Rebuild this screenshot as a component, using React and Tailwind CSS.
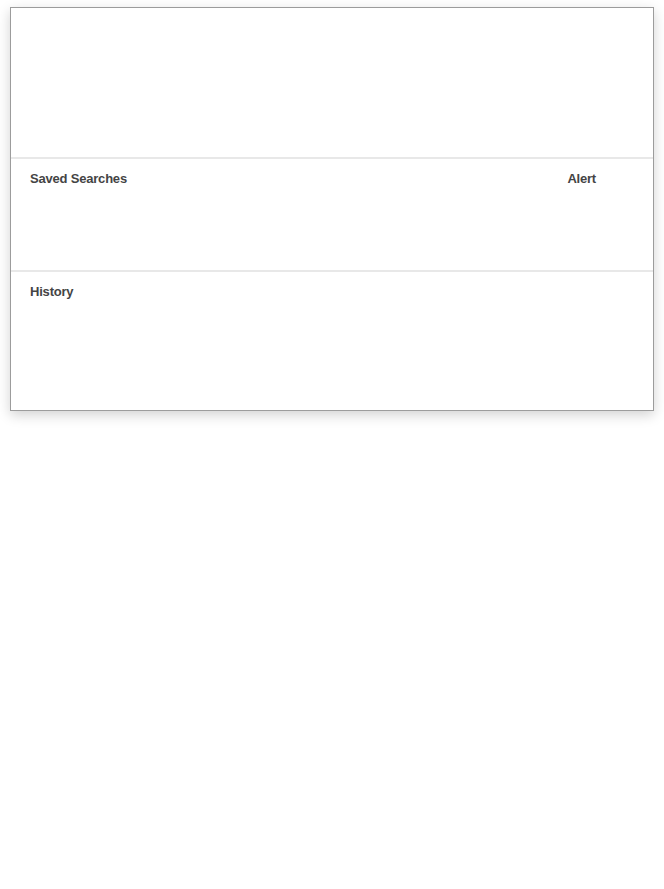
export default function App() {
  return (
    <div className="min-h-screen bg-white pt-[7px] pl-[10px]" style={{ fontFamily: '"Liberation Sans", Arial, sans-serif' }}>
      <div className="w-[644px] border border-[#9c9c9c] bg-white shadow-[0_4px_12px_rgba(0,0,0,0.18)]">
        <div className="h-[151px] border-b-2 border-[#e8e8e8]" />
        <div className="h-[113px] border-b-2 border-[#e8e8e8] px-[19px] pt-[12px]">
          <div className="flex items-start text-[13px] font-bold leading-4 tracking-[-0.2px] text-[#444]">
            <span className="flex-1">Saved Searches</span>
            <span className="mr-[38px]">Alert</span>
          </div>
        </div>
        <div className="h-[138px] px-[19px] pt-[12px]">
          <div className="text-[13px] font-bold leading-4 tracking-[-0.2px] text-[#444]">History</div>
        </div>
      </div>
    </div>
  );
}
